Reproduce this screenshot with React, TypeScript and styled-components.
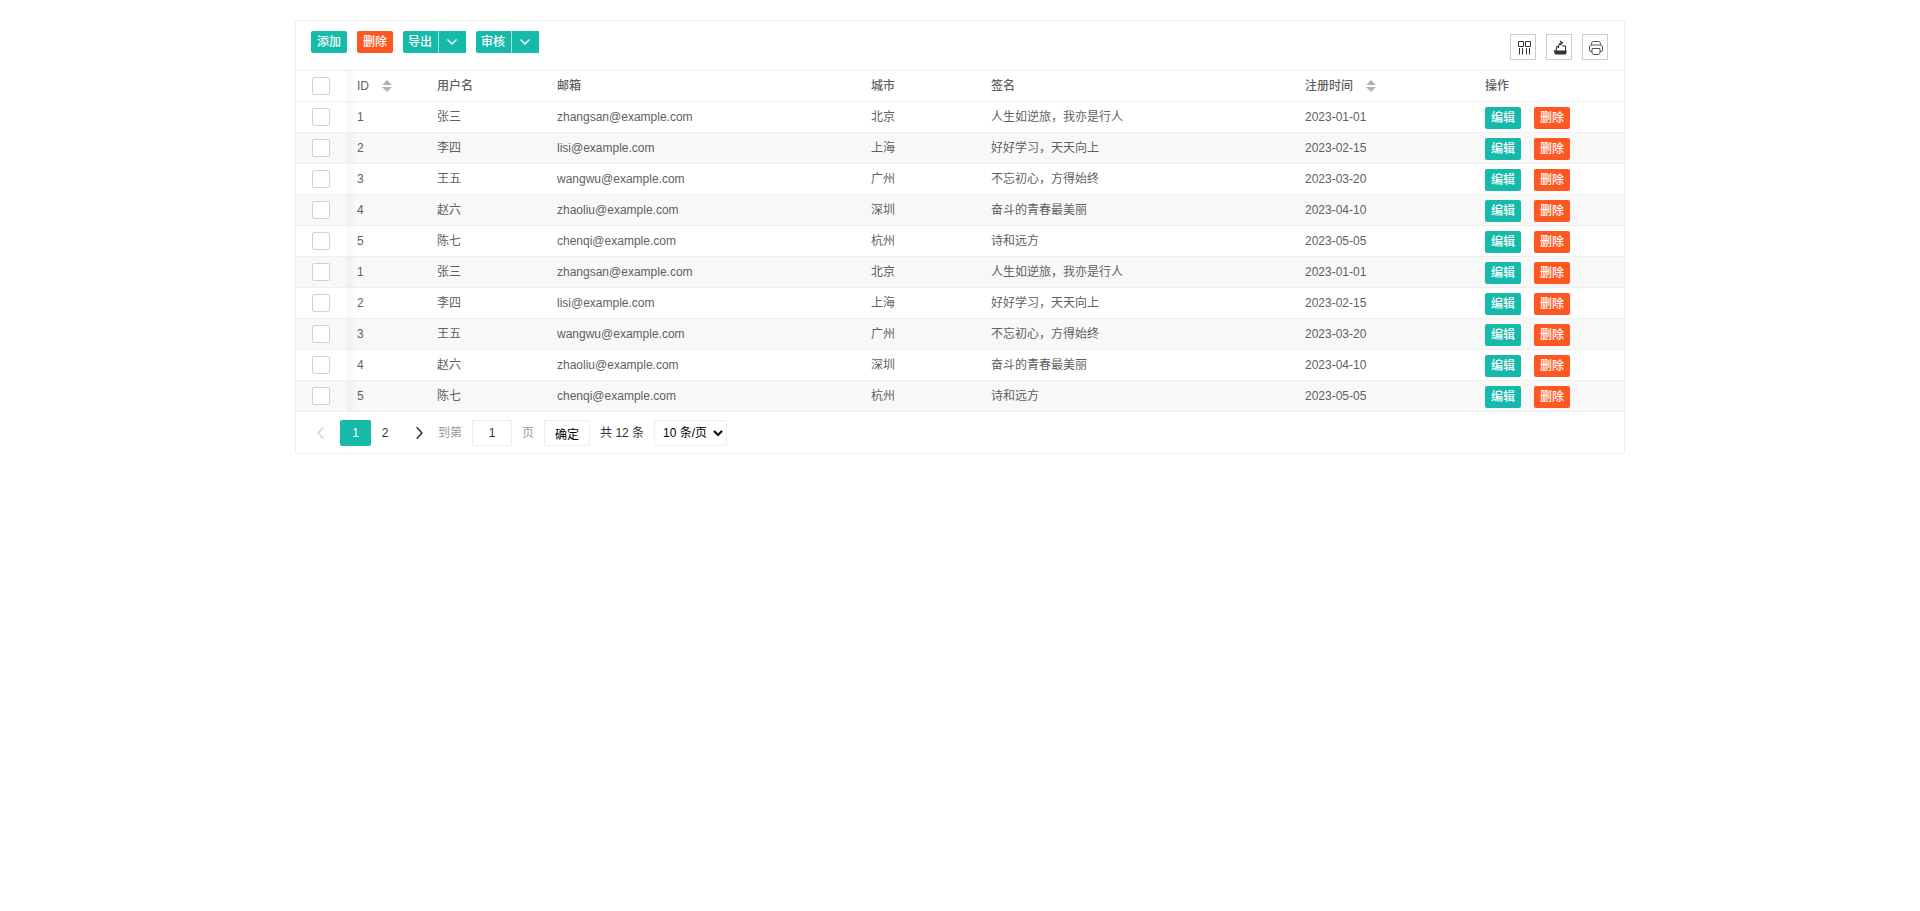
import React from "react";
import styled, { createGlobalStyle, css } from "styled-components";

const fontStack = `"Liberation Sans", "Noto Sans CJK SC", sans-serif`;

const GlobalStyle = createGlobalStyle`
  *, *::before, *::after { box-sizing: border-box; }
  body {
    margin: 0;
    background: #fff;
    color: #5f5f5f;
    font: 12px/24px ${fontStack};
  }
  button, input, select { font: inherit; margin: 0; }
`;

const Panel = styled.main`
  max-width: 1330px;
  margin: 20px auto;
  border: 1px solid #eee;
  border-radius: 2px;
`;

const Toolbar = styled.header`
  display: flex;
  justify-content: space-between;
  align-items: flex-start;
  min-height: 50px;
  padding: 10px 15px;
  border-bottom: 1px solid #eee;
`;

const ButtonRow = styled.div`
  display: flex;
  gap: 10px;
`;

const ToolRow = styled.div`
  display: flex;
  gap: 10px;
  padding: 3px 1px 0 0;
`;

const Button = styled.button<{ $danger?: boolean }>`
  height: 22px;
  padding: 0 6px;
  border: 0;
  border-radius: 2px;
  background: ${(p) => (p.$danger ? "#ff5722" : "#16baaa")};
  color: #fff;
  font-weight: 500;
  line-height: 22px;
  white-space: nowrap;
  cursor: pointer;
`;

const SplitButton = styled.div`
  display: flex;
`;

const SplitMain = styled(Button)`
  border-right: 1px solid #a2e3dd;
  border-radius: 2px 0 0 2px;
  padding: 0 6px 0 5px;
`;

const SplitToggle = styled(Button)`
  display: flex;
  align-items: center;
  justify-content: flex-start;
  width: 27px;
  padding: 0 7px;
  border-radius: 0;
`;

const ToolButton = styled.button`
  display: flex;
  width: 26px;
  height: 26px;
  padding: 0;
  border: 1px solid #ccc;
  background: #fff;
  color: #333;
  cursor: pointer;
`;

const Table = styled.table`
  width: 100%;
  table-layout: fixed;
  border-collapse: separate;
  border-spacing: 0;
`;

const Col = styled.col<{ $width?: number }>`
  ${(p) => p.$width && css`width: ${p.$width}px;`}
`;

const Row = styled.tr<{ $striped?: boolean }>`
  background: ${(p) => (p.$striped ? "#f8f8f8" : "#fff")};
`;

const cellStyle = css`
  height: 31px;
  padding: 0 10px;
  border-bottom: 1px solid #eee;
  line-height: 24px;
  text-align: left;
  white-space: nowrap;
  overflow: hidden;
  text-overflow: ellipsis;
`;

const fixedEdge = css`
  background-image: linear-gradient(to right, rgba(0, 0, 0, 0.04), transparent 9px);
`;

const HeadCell = styled.th<{ $edge?: boolean }>`
  ${cellStyle}
  font-weight: 500;
  ${(p) => p.$edge && fixedEdge}
`;

const Cell = styled.td<{ $edge?: boolean }>`
  ${cellStyle}
  ${(p) => p.$edge && fixedEdge}
`;

const checkLayout = css`
  padding: 0 16px;
`;

const CheckHead = styled(HeadCell)`${checkLayout}`;
const CheckCell = styled(Cell)`${checkLayout}`;

const Checkbox = styled.input`
  display: block;
  appearance: none;
  width: 18px;
  height: 18px;
  border: 1px solid #d2d2d2;
  border-radius: 2px;
  background: #fff;
  &:checked { background: #16baaa; border-color: #16baaa; }
`;

const HeadLabel = styled.span`
  display: flex;
  align-items: center;
  gap: 13px;
`;

const SortButton = styled.button`
  display: flex;
  padding: 0;
  border: 0;
  background: none;
  color: #b2b2b2;
  cursor: pointer;
`;

const RowActions = styled.div`
  display: flex;
  gap: 13px;
  padding-top: 2px;
`;

const Pager = styled.nav`
  display: flex;
  align-items: center;
  height: 41px;
  padding: 0 6px;
  color: #333;
`;

const PageButton = styled.button<{ $width: number; $active?: boolean }>`
  display: flex;
  align-items: center;
  justify-content: center;
  width: ${(p) => p.$width}px;
  height: 26px;
  padding: 0;
  border: 0;
  border-radius: 2px;
  background: ${(p) => (p.$active ? "#16baaa" : "transparent")};
  color: ${(p) => (p.$active ? "#fff" : "#333")};
  cursor: pointer;
  &:disabled { color: #d2d2d2; }
`;

const PagerForm = styled.form`
  display: flex;
  align-items: center;
  gap: 10px;
`;

const JumpLabel = styled.label`
  display: flex;
  align-items: center;
  gap: 10px;
  color: #999;
`;

const fieldStyle = css`
  height: 26px;
  border: 1px solid #eee;
  border-radius: 2px;
  background: #fff;
`;

const JumpInput = styled.input`
  ${fieldStyle}
  width: 40px;
  padding: 0 3px;
  color: #333;
  text-align: center;
`;

const ConfirmButton = styled.button`
  ${fieldStyle}
  padding: 2px 10px 0;
  color: #000;
  cursor: pointer;
`;

const SizeSelect = styled.select`
  ${fieldStyle}
  width: 73px;
  padding: 0 0 0 4px;
  color: #000;
`;

const Chevron = ({ d, size = 12 }: { d: string; size?: number }) => (
  <svg width={size} height={size} viewBox="0 0 12 12" fill="none" stroke="currentColor" strokeWidth="1.3" aria-hidden="true">
    <path d={d} />
  </svg>
);

const SortIcon = () => (
  <svg width="10" height="12" viewBox="0 0 10 12" fill="currentColor" aria-hidden="true">
    <path d="M5 0L10 5H0zM5 12L0 7h10z" />
  </svg>
);

const ColumnsIcon = () => (
  <svg width="24" height="24" viewBox="0 0 24 24" fill="none" stroke="currentColor" aria-hidden="true">
    <path d="M7.500 6.500h5v5h-5zM14.500 6.500h5v5h-5z" />
    <path d="M8.500 13v6.500M11.500 13v6.500M15.500 13v6.500M18.500 13v6.500" />
  </svg>
);

const ExportIcon = () => (
  <svg width="24" height="24" viewBox="0 0 24 24" aria-hidden="true">
    <path d="M6.500 15.500h2L9.500 11H12v1h-1.500l-.8 3.500h8.300V11.500h-3v-1h4v5h.8l-.8 4H8z" fill="currentColor" />
    <path d="M11.500 13c0-3.500 1-5 3-5M13 6l2.500 2L13 10" fill="none" stroke="currentColor" strokeWidth="1.100" />
  </svg>
);

const PrintIcon = () => (
  <svg width="24" height="24" viewBox="0 0 24 24" fill="none" stroke="#555" aria-hidden="true">
    <path d="M8.500 10V8.500q0-2 2-2h5q2 0 2 2V10" />
    <path d="M9 16.500H8q-1.500 0-1.500-1.500v-3q0-2 2-2h9q2 0 2 2v3q0 1.500-1.500 1.500h-1" />
    <path d="M9 13.500h8v4q0 2-2 2h-4q-2 0-2-2z" />
  </svg>
);

const users = [
  { id: 1, name: "张三", email: "zhangsan@example.com", city: "北京", sign: "人生如逆旅，我亦是行人", date: "2023-01-01" },
  { id: 2, name: "李四", email: "lisi@example.com", city: "上海", sign: "好好学习，天天向上", date: "2023-02-15" },
  { id: 3, name: "王五", email: "wangwu@example.com", city: "广州", sign: "不忘初心，方得始终", date: "2023-03-20" },
  { id: 4, name: "赵六", email: "zhaoliu@example.com", city: "深圳", sign: "奋斗的青春最美丽", date: "2023-04-10" },
  { id: 5, name: "陈七", email: "chenqi@example.com", city: "杭州", sign: "诗和远方", date: "2023-05-05" },
];
const rows = [...users, ...users];

const SplitAction = ({ label }: { label: string }) => (
  <SplitButton>
    <SplitMain type="button">{label}</SplitMain>
    <SplitToggle type="button" aria-label={`${label}选项`}>
      <Chevron d="M1.500 3.500L6 8l4.500-4.500" />
    </SplitToggle>
  </SplitButton>
);

export default function App() {
  return (
    <>
      <GlobalStyle />
      <Panel>
        <Toolbar>
          <ButtonRow>
            <Button type="button">添加</Button>
            <Button type="button" $danger>删除</Button>
            <SplitAction label="导出" />
            <SplitAction label="审核" />
          </ButtonRow>
          <ToolRow>
            <ToolButton type="button" aria-label="筛选列"><ColumnsIcon /></ToolButton>
            <ToolButton type="button" aria-label="导出"><ExportIcon /></ToolButton>
            <ToolButton type="button" aria-label="打印"><PrintIcon /></ToolButton>
          </ToolRow>
        </Toolbar>

        <Table>
          <colgroup>
            <Col $width={51} />
            <Col $width={80} />
            <Col $width={120} />
            <Col />
            <Col $width={120} />
            <Col />
            <Col $width={180} />
            <Col $width={149} />
          </colgroup>
          <thead>
            <Row>
              <CheckHead scope="col"><Checkbox type="checkbox" aria-label="全选" /></CheckHead>
              <HeadCell scope="col" $edge>
                <HeadLabel>ID<SortButton type="button" aria-label="按 ID 排序"><SortIcon /></SortButton></HeadLabel>
              </HeadCell>
              <HeadCell scope="col">用户名</HeadCell>
              <HeadCell scope="col">邮箱</HeadCell>
              <HeadCell scope="col">城市</HeadCell>
              <HeadCell scope="col">签名</HeadCell>
              <HeadCell scope="col">
                <HeadLabel>注册时间<SortButton type="button" aria-label="按注册时间排序"><SortIcon /></SortButton></HeadLabel>
              </HeadCell>
              <HeadCell scope="col">操作</HeadCell>
            </Row>
          </thead>
          <tbody>
            {rows.map((user, index) => (
              <Row key={index} $striped={index % 2 === 1}>
                <CheckCell><Checkbox type="checkbox" aria-label={`选择 ${user.name}`} /></CheckCell>
                <Cell $edge>{user.id}</Cell>
                <Cell>{user.name}</Cell>
                <Cell>{user.email}</Cell>
                <Cell>{user.city}</Cell>
                <Cell>{user.sign}</Cell>
                <Cell>{user.date}</Cell>
                <Cell>
                  <RowActions>
                    <Button type="button">编辑</Button>
                    <Button type="button" $danger>删除</Button>
                  </RowActions>
                </Cell>
              </Row>
            ))}
          </tbody>
        </Table>

        <Pager aria-label="分页">
          <PageButton type="button" $width={38} disabled aria-label="上一页">
            <Chevron size={14} d="M8 1L3.500 6 8 11" />
          </PageButton>
          <PageButton type="button" $width={31} $active aria-current="page">1</PageButton>
          <PageButton type="button" $width={28}>2</PageButton>
          <PageButton type="button" $width={39} aria-label="下一页">
            <Chevron size={14} d="M4 1l4.500 5L4 11" />
          </PageButton>
          <PagerForm onSubmit={(e) => e.preventDefault()}>
            <JumpLabel>
              <span>到第</span>
              <JumpInput type="text" defaultValue="1" />
              <span>页</span>
            </JumpLabel>
            <ConfirmButton type="submit">确定</ConfirmButton>
            <span>共 12 条</span>
            <SizeSelect defaultValue="10" aria-label="每页条数">
              <option value="10">10 条/页</option>
              <option value="20">20 条/页</option>
              <option value="50">50 条/页</option>
            </SizeSelect>
          </PagerForm>
        </Pager>
      </Panel>
    </>
  );
}
